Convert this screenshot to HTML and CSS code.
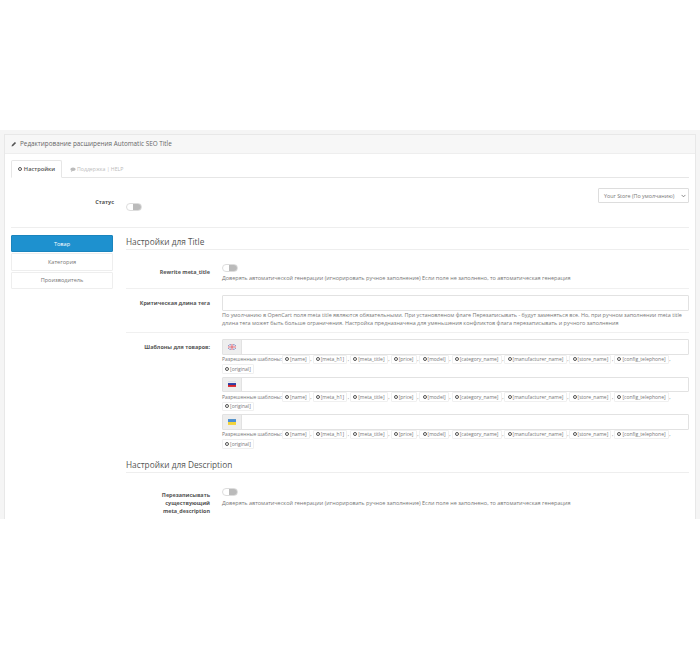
FILE: index.html
```html
<!DOCTYPE html>
<html lang="ru">
<head>
<meta charset="utf-8">
<title>Automatic SEO Title</title>
<link rel="stylesheet" href="styles.css">
</head>
<body>
<div class="stage">
  <div class="panel">
    <div class="panel-heading">
      <svg class="ic-pencil" viewBox="0 0 10 10"><path d="M1 9l.5-2.5L6.5 1.5l2 2-5 5z" fill="#555"/></svg>
      <span>Редактирование расширения Automatic SEO Title</span>
    </div>
    <div class="panel-body">
      <div class="tabs">
        <div class="tab active"><span class="gear"></span>Настройки</div>
        <div class="tab muted"><svg class="ic-chat" viewBox="0 0 10 8"><ellipse cx="5" cy="3.5" rx="4.5" ry="3" fill="#bbb"/><path d="M2 5.5L1.5 8 5 6z" fill="#bbb"/></svg>Поддержка | HELP</div>
      </div>
      <div class="status-row">
        <div class="status-label">Статус</div>
        <div class="status-toggle"><span class="toggle"></span></div>
        <div class="select">Your Store (По умолчанию)<svg class="chev" viewBox="0 0 6 4"><path d="M.7.7L3 3 5.3.7" fill="none" stroke="#666" stroke-width=".9"/></svg></div>
      </div>
      <div class="columns">
        <div class="nav">
          <div class="nav-item active">Товар</div>
          <div class="nav-item">Категория</div>
          <div class="nav-item">Производитель</div>
        </div>
        <div class="content">
          <h2 class="section">Настройки для Title</h2>
          <div class="row row-rewrite">
            <div class="label">Rewrite meta_title</div>
            <div class="field">
              <span class="toggle"></span>
              <p class="help">Доверять автоматической генерации (игнорировать ручное заполнение) Если поле не заполнено, то автоматическая генерация</p>
            </div>
          </div>
          <div class="row row-length">
            <div class="label">Критическая длина тега</div>
            <div class="field">
              <div class="input"></div>
              <p class="help help-long">По умолчанию в OpenCart поля meta title являются обязательными. При установленом флаге Перезаписывать - будут заменяться все. Но, при ручном заполнении meta title длина тега может быть больше ограничения. Настройка предназначена для уменьшения конфликтов флага перезаписывать и ручного заполнения</p>
            </div>
          </div>
          <div class="row row-templates">
            <div class="label">Шаблоны для товаров:</div>
            <div class="field">
              <div class="input-group"><span class="addon"><svg class="flag" viewBox="0 0 11 8"><rect width="11" height="8" fill="#9aa0c8"/><path d="M0 0l11 8M11 0L0 8" stroke="#fff" stroke-width="1.2"/><path d="M5.5 0v8M0 4h11" stroke="#fff" stroke-width="2.6"/><path d="M5.5 0v8M0 4h11" stroke="#d8606c" stroke-width="1.4"/></svg></span><span class="grow"></span></div>
              <div class="tags"><span class="tags-label">Разрешенные шаблоны:</span><span class="tag"><span class="gear"></span>[name]</span><span class="sep">,</span><span class="tag"><span class="gear"></span>[meta_h1]</span><span class="sep">,</span><span class="tag"><span class="gear"></span>[meta_title]</span><span class="sep">,</span><span class="tag"><span class="gear"></span>[price]</span><span class="sep">,</span><span class="tag"><span class="gear"></span>[model]</span><span class="sep">,</span><span class="tag"><span class="gear"></span>[category_name]</span><span class="sep">,</span><span class="tag"><span class="gear"></span>[manufacturer_name]</span><span class="sep">,</span><span class="tag"><span class="gear"></span>[store_name]</span><span class="sep">,</span><span class="tag"><span class="gear"></span>[config_telephone]</span><span class="sep">,</span><span class="tag"><span class="gear"></span>[original]</span></div>
              <div class="input-group"><span class="addon"><svg class="flag" viewBox="0 0 11 8"><rect width="11" height="8" fill="#d8262c"/><rect width="11" height="5.3" fill="#2a3fa8"/><rect width="11" height="2.7" fill="#eee"/></svg></span><span class="grow"></span></div>
              <div class="tags"><span class="tags-label">Разрешенные шаблоны:</span><span class="tag"><span class="gear"></span>[name]</span><span class="sep">,</span><span class="tag"><span class="gear"></span>[meta_h1]</span><span class="sep">,</span><span class="tag"><span class="gear"></span>[meta_title]</span><span class="sep">,</span><span class="tag"><span class="gear"></span>[price]</span><span class="sep">,</span><span class="tag"><span class="gear"></span>[model]</span><span class="sep">,</span><span class="tag"><span class="gear"></span>[category_name]</span><span class="sep">,</span><span class="tag"><span class="gear"></span>[manufacturer_name]</span><span class="sep">,</span><span class="tag"><span class="gear"></span>[store_name]</span><span class="sep">,</span><span class="tag"><span class="gear"></span>[config_telephone]</span><span class="sep">,</span><span class="tag"><span class="gear"></span>[original]</span></div>
              <div class="input-group"><span class="addon"><svg class="flag" viewBox="0 0 11 8"><rect width="11" height="8" fill="#f2d33a"/><rect width="11" height="4" fill="#4a8fd8"/></svg></span><span class="grow"></span></div>
              <div class="tags"><span class="tags-label">Разрешенные шаблоны:</span><span class="tag"><span class="gear"></span>[name]</span><span class="sep">,</span><span class="tag"><span class="gear"></span>[meta_h1]</span><span class="sep">,</span><span class="tag"><span class="gear"></span>[meta_title]</span><span class="sep">,</span><span class="tag"><span class="gear"></span>[price]</span><span class="sep">,</span><span class="tag"><span class="gear"></span>[model]</span><span class="sep">,</span><span class="tag"><span class="gear"></span>[category_name]</span><span class="sep">,</span><span class="tag"><span class="gear"></span>[manufacturer_name]</span><span class="sep">,</span><span class="tag"><span class="gear"></span>[store_name]</span><span class="sep">,</span><span class="tag"><span class="gear"></span>[config_telephone]</span><span class="sep">,</span><span class="tag"><span class="gear"></span>[original]</span></div>
            </div>
          </div>
          <h2 class="section section-desc">Настройки для Description</h2>
          <div class="row row-desc">
            <div class="label">Перезаписывать существующий meta_description</div>
            <div class="field">
              <span class="toggle"></span>
              <p class="help">Доверять автоматической генерации (игнорировать ручное заполнение) Если поле не заполнено, то автоматическая генерация</p>
            </div>
          </div>
        </div>
      </div>
    </div>
  </div>
</div>
</body>
</html>
```
FILE: styles.css
```css
* { box-sizing: border-box; }
html, body { margin: 0; background: #fff; }
body { height: 650px; padding-top: 130px; font-family: "Open Sans", sans-serif; font-size: 6px; color: #666; overflow: hidden; }
.stage { height: 389px; overflow: hidden; background: #f5f5f5; padding: 4px 4px 0; }
.panel { background: #fff; border: 1px solid #e8e8e8; border-bottom: 0; height: 385px; overflow: hidden; }
.panel-heading { height: 19px; background: #f7f7f7; border-bottom: 1px solid #eee; display: flex; align-items: center; padding-left: 6px; padding-bottom: 1px; font-size: 6.35px; color: #666; }
.ic-pencil { width: 6px; height: 6px; margin-right: 3px; }
.panel-body { padding: 6px 6px 0; }
.tabs { display: flex; height: 18px; border-bottom: 1px solid #e6e6e6; }
.tab { height: 18px; display: flex; align-items: center; justify-content: center; font-size: 5.7px; font-weight: 600; color: #555; }
.tab.active { width: 51px; background: #fff; border: 1px solid #e6e6e6; border-bottom-color: #fff; border-radius: 2px 2px 0 0; }
.tab.muted { color: #bbb; font-weight: 400; font-size: 5.2px; padding-left: 8px; }
.ic-chat { width: 6px; height: 5px; margin-right: 1px; }
.gear { width: 4.5px; height: 4.5px; border: 1.6px solid #555; border-radius: 50%; display: inline-block; margin-right: 1.5px; flex: none; }
.status-row { height: 50px; border-bottom: 1px solid #eee; display: flex; }
.status-label { width: 103px; padding-top: 20px; text-align: right; font-weight: 700; color: #555; font-size: 5.5px; line-height: 9px; }
.status-toggle { padding: 25px 0 0 12px; flex: 1; }
.select { width: 91px; height: 15px; margin-top: 10px; border: 1px solid #ddd; border-radius: 1px; display: flex; align-items: center; justify-content: space-between; padding: 0 2px 0 5px; color: #777; font-size: 5.4px; white-space: nowrap; }
.chev { width: 5px; height: 4px; }
.toggle { display: block; width: 16px; height: 8px; border-radius: 4px; border: 1px solid #ddd; background: linear-gradient(to right, #fff 45%, #bbb 45%); }
.columns { display: flex; padding-top: 7px; gap: 13px; }
.nav { width: 102px; flex: none; display: flex; flex-direction: column; gap: 1px; }
.nav-item { height: 17.5px; border: 1px solid #eee; border-radius: 1px; display: flex; align-items: center; justify-content: center; color: #777; font-size: 5.6px; }
.nav-item.active { height: 17px; background: #1e91cf; border-color: #1a84bd; color: #fff; }
.content { flex: 1; min-width: 0; }
.section { margin: 0; height: 15px; border-bottom: 1px solid #eee; font-size: 8.3px; font-weight: 400; color: #555; line-height: 13px; }
.section-desc { height: 15px; margin-top: 6px; }
.row { display: flex; border-bottom: 1px solid #f0f0f0; }
.label { width: 84px; flex: none; text-align: right; font-size: 5.45px; font-weight: 700; color: #555; line-height: 8px; }
.field { flex: 1; min-width: 0; margin-left: 12px; }
.help { margin: 0; font-size: 5.5px; line-height: 8px; color: #777; }
.row-rewrite { height: 39px; padding-top: 14px; }
.row-rewrite .label { padding-top: 4px; }
.row-rewrite .help { margin-top: 2px; }
.row-length { height: 44px; padding-top: 6px; }
.row-length .label { padding-top: 4px; }
.input { height: 15.5px; border: 1px solid #e2e2e2; border-radius: 1px; }
.help-long { font-size: 5.44px; }
.row-templates { border: 0; padding-top: 6px; }
.row-templates .label { padding-top: 4px; }
.input-group { display: flex; height: 15.5px; border: 1px solid #e2e2e2; border-radius: 1px; }
.addon { width: 19px; background: #eee; display: flex; align-items: center; justify-content: center; border-right: 1px solid #e2e2e2; }
.flag { width: 8px; height: 6px; }
.grow { flex: 1; }
.tags { display: flex; flex-wrap: wrap; align-items: center; font-size: 5px; color: #777; margin-bottom: 3px; height: 19px; align-content: flex-start; }
.tags-label { font-size: 5px; }
.tag { display: inline-flex; align-items: center; height: 9.5px; padding: 0 2.1px; border: 1px solid #f0f0f0; border-radius: 1px; margin-right: .6px; }
.tag .gear { width: 4px; height: 4px; border-width: 1.4px; margin-right: 1px; }
.sep { margin-right: 1px; }
.row-desc { border: 0; padding-top: 15px; }
.row-desc .label { padding-top: 3px; }
.row-desc .help { margin-top: 3px; }
```
